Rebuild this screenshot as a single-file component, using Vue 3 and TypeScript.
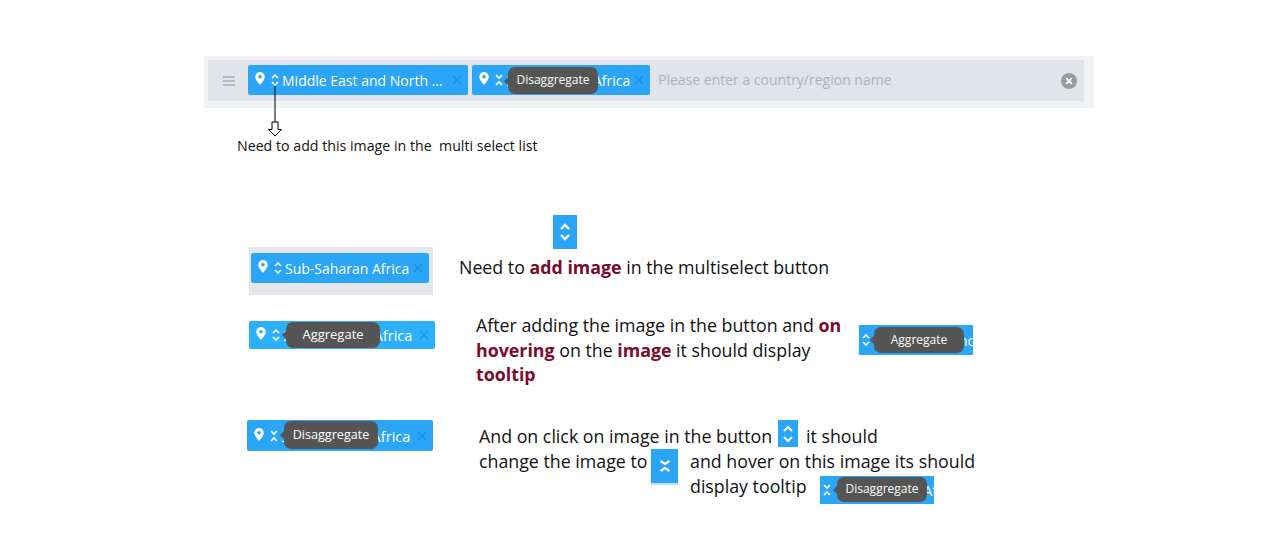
<script setup lang="ts">
interface Piece {
  id: string
  x: number
  y: number
  w: number
  h: number
  mode: 'up' | 'down'
  label: string
  font?: number
  tip?: string
  tipX?: number
  tipY?: number
  tipW?: number
  tipH?: number
  tipFont?: number
  light?: boolean
}

const pieces: Piece[] = [
  { id: 'a', x: 248, y: 65, w: 220, h: 30, mode: 'up', label: 'Middle East and North ...' },
  { id: 'b', x: 472, y: 65, w: 178, h: 30, mode: 'down', label: 'Sub-Saharan Africa', tip: 'Disaggregate', tipX: 36, tipY: 2, tipW: 90, tipH: 27, tipFont: 12 },
  { id: 'c', x: 251, y: 253, w: 178, h: 30, mode: 'up', label: 'Sub-Saharan Africa' },
  { id: 'd', x: 249, y: 321, w: 186, h: 28, mode: 'up', label: 'Sub-Saharan Africa', font: 14.6, tip: 'Aggregate', tipX: 37, tipY: 1, tipW: 94, tipH: 26, tipFont: 13, light: true },
  { id: 'e', x: 247, y: 420, w: 186, h: 31, mode: 'down', label: 'Sub-Saharan Africa', font: 14.6, tip: 'Disaggregate', tipX: 37, tipY: 1, tipW: 94, tipH: 28, tipFont: 12.6 },
]

function tipStyle(p: Piece) {
  return {
    left: `${p.tipX}px`,
    top: `${p.tipY}px`,
    width: `${p.tipW}px`,
    height: `${p.tipH}px`,
    fontSize: `${p.tipFont}px`,
  }
}

function chipStyle(p: Piece) {
  return {
    left: `${p.x}px`,
    top: `${p.y}px`,
    width: `${p.w}px`,
    height: `${p.h}px`,
    fontSize: `${p.font ?? 14}px`,
  }
}
</script>

<template>
  <div class="canvas">
    <div class="bar">
      <div class="bar__inner">
        <svg class="bar__menu" width="14" height="10" viewBox="0 0 14 10">
          <path d="M1 1h12M1 5h12M1 9h12" stroke="#8b9095" stroke-width="1.200" fill="none" />
        </svg>
        <span class="bar__placeholder">Please enter a country/region name</span>
        <svg class="bar__clear" width="16" height="16" viewBox="0 0 16 16">
          <circle cx="8" cy="8" r="8" fill="#9a9ba0" />
          <path d="M5.200 5.200l5.600 5.600M10.800 5.200l-5.600 5.600" stroke="#fff" stroke-width="1.800" />
        </svg>
      </div>
    </div>

    <div class="group-bg" />

    <div
      v-for="p in pieces"
      :key="p.id"
      class="chip"
      :class="{ 'chip--light': p.light }"
      :style="chipStyle(p)"
    >
      <svg class="chip__pin" width="10" height="13" viewBox="0 0 10 13">
        <path d="M5 0a4.800 4.800 0 0 0-4.800 4.800C.2 8 5 13 5 13s4.800-5 4.800-8.200A4.800 4.800 0 0 0 5 0zm0 6.600a1.800 1.800 0 1 1 0-3.600 1.800 1.800 0 0 1 0 3.600z" fill="#fff" />
      </svg>
      <svg class="chip__toggle" width="8" height="12" viewBox="0 0 8 12">
        <path v-if="p.mode === 'up'" d="M1 4l3-3 3 3M1 8l3 3 3-3" stroke="#fff" stroke-width="1.600" fill="none" />
        <path v-else d="M1 1l3 3 3-3M1 11l3-3 3 3" stroke="#fff" stroke-width="1.600" fill="none" />
      </svg>
      <span class="chip__label">{{ p.label }}</span>
      <svg class="chip__close" width="10" height="10" viewBox="0 0 10 10">
        <path d="M1 1l8 8M9 1l-8 8" stroke="#1b8fdc" stroke-width="1.300" />
      </svg>
      <div v-if="p.tip" class="tip" :style="tipStyle(p)">{{ p.tip }}</div>
    </div>

    <div class="pointer">
      <svg width="16" height="52" viewBox="0 0 16 52">
        <path d="M8 0v36" stroke="#000" stroke-width="1" />
        <path d="M5 36h6v7.500h3.500L8 50 1.500 43.500H5z" fill="#fff" stroke="#000" stroke-width="1" />
      </svg>
    </div>
    <p class="note note--small">Need to add this image in the&nbsp; multi select list</p>

    <div class="swatch swatch--top">
      <svg width="12" height="20" viewBox="0 0 12 20">
        <path d="M2 7l4-4 4 4M2 13l4 4 4-4" stroke="#fff" stroke-width="2.400" fill="none" />
      </svg>
    </div>
    <p class="note note--add">Need to <b>add image</b> in the multiselect button</p>

    <p class="note note--hover">
      After adding the image in the button and <b>on</b><br />
      <b>hovering</b> on the <b>image</b> it should display<br />
      <b>tooltip</b>
    </p>

    <div class="thumb thumb--agg">
      <svg class="thumb__icon" width="8" height="12" viewBox="0 0 8 12">
        <path d="M1 4l3-3 3 3M1 8l3 3 3-3" stroke="#fff" stroke-width="1.600" fill="none" />
      </svg>
      <span class="thumb__text">no</span>
      <div class="tip tip--thumb">Aggregate</div>
    </div>

    <p class="note note--click1">And on click on image in the button</p>
    <div class="swatch swatch--inline">
      <svg width="12" height="18" viewBox="0 0 12 18">
        <path d="M2 6l4-4 4 4M2 12l4 4 4-4" stroke="#fff" stroke-width="2" fill="none" />
      </svg>
    </div>
    <p class="note note--click2">it should</p>
    <p class="note note--click3">change the image to</p>
    <div class="swatch swatch--down">
      <svg width="14" height="14" viewBox="0 0 14 14">
        <path d="M2.500 2l4.500 3 4.500-3M2.500 12l4.500-3 4.500 3" stroke="#fff" stroke-width="2.200" fill="none" />
      </svg>
    </div>
    <p class="note note--click4">and hover on this image its should<br />display tooltip</p>

    <div class="thumb thumb--dis">
      <svg class="thumb__icon" width="8" height="12" viewBox="0 0 8 12">
        <path d="M1 1l3 3 3-3M1 11l3-3 3 3" stroke="#fff" stroke-width="1.600" fill="none" />
      </svg>
      <span class="thumb__text">Af</span>
      <div class="tip tip--thumb tip--dis">Disaggregate</div>
    </div>
  </div>
</template>

<style>
html,
body {
  background: #fff;
  overflow: hidden;
}
</style>

<style scoped>
.canvas {
  position: relative;
  width: 1275px;
  height: 544px;
  background: #fff;
  font-family: "Open Sans", "Liberation Sans", sans-serif;
  overflow: hidden;
}

.bar {
  position: absolute;
  left: 204px;
  top: 56px;
  width: 890px;
  height: 52px;
  padding: 4px 10px 7px 4px;
  box-sizing: border-box;
  background: #f1f2f6;
}

.bar__inner {
  display: flex;
  align-items: center;
  height: 100%;
  padding: 0 7px 0 14px;
  background: #e1e4e9;
}

.bar__menu {
  flex-shrink: 0;
}

.bar__placeholder {
  margin: -2px 0 0 422px;
  flex: 1;
  font-size: 14px;
  color: #aeb2b8;
}

.group-bg {
  position: absolute;
  left: 249px;
  top: 247px;
  width: 184px;
  height: 48px;
  background: #e3e6ea;
}

.chip {
  position: absolute;
  display: flex;
  align-items: center;
  padding: 0 6px 0 7px;
  box-sizing: border-box;
  border-radius: 2px;
  background: #2aa5f7;
  color: #fff;
}

.chip--light {
  background: #2db0fb;
}

.chip__pin {
  flex-shrink: 0;
  margin-top: -3px;
}

.chip__toggle {
  flex-shrink: 0;
  margin-left: 6px;
}

.chip__label {
  flex: 1;
  margin-left: 3px;
  overflow: hidden;
  white-space: nowrap;
}

.chip__close {
  flex-shrink: 0;
}

.tip {
  position: absolute;
  display: flex;
  align-items: center;
  justify-content: center;
  padding-bottom: 2px;
  box-sizing: border-box;
  border-radius: 7px;
  background: #555;
  color: #fff;
  font-size: 12px;
}

.tip::before {
  content: "";
  position: absolute;
  left: -4px;
  top: 50%;
  margin-top: -4px;
  border-top: 4px solid transparent;
  border-bottom: 4px solid transparent;
  border-right: 4px solid #555;
}

.tip--thumb {
  top: 2px;
  left: 15px;
  width: 90px;
  height: 26px;
}

.tip--dis {
  top: 1px;
  left: 17px;
  height: 25px;
}

.pointer {
  position: absolute;
  left: 267px;
  top: 86px;
  line-height: 0;
}

.note {
  position: absolute;
  margin: 0;
  color: #111;
  font-size: 17.800px;
  line-height: 25px;
  white-space: nowrap;
}

.note b {
  color: #7b0a2e;
  font-weight: 700;
}

.note--small {
  left: 237px;
  top: 137px;
  font-size: 14.200px;
  line-height: 18px;
}

.note--add {
  left: 459px;
  top: 255px;
}

.note--hover {
  left: 476px;
  top: 313px;
  line-height: 24.500px;
}

.note--click1 {
  left: 479px;
  top: 424px;
}

.note--click2 {
  left: 806px;
  top: 424px;
}

.note--click3 {
  left: 479px;
  top: 449px;
}

.note--click4 {
  left: 690px;
  top: 449px;
}

.swatch {
  position: absolute;
  display: flex;
  align-items: center;
  justify-content: center;
  background: #2aa5f7;
}

.swatch--top {
  left: 553px;
  top: 215px;
  width: 24px;
  height: 34px;
}

.swatch--inline {
  left: 778px;
  top: 420px;
  width: 20px;
  height: 27px;
}

.swatch--down {
  left: 651px;
  top: 449px;
  width: 27px;
  height: 36px;
  box-sizing: border-box;
  border-bottom: 2px solid #bfe3fb;
}

.thumb {
  position: absolute;
  display: flex;
  align-items: center;
  justify-content: space-between;
  width: 114px;
  box-sizing: border-box;
  padding-left: 3px;
  background: #2aa5f7;
  color: #fff;
  font-size: 14px;
  overflow: hidden;
}

.thumb--agg {
  left: 859px;
  top: 325px;
  height: 30px;
}

.thumb--dis {
  left: 820px;
  top: 476px;
  height: 28px;
}

.thumb__text {
  margin-right: -3px;
  white-space: nowrap;
}
</style>
